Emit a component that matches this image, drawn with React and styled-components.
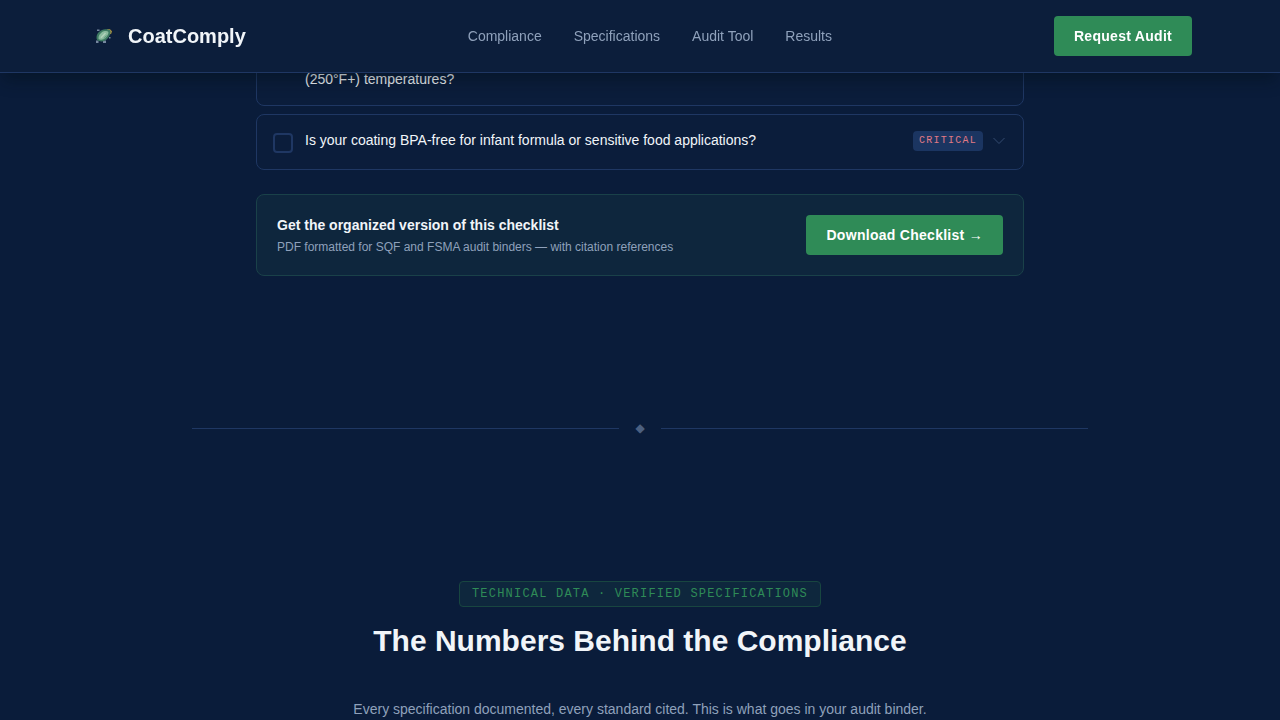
import React from "react";
import styled, { createGlobalStyle, ThemeProvider } from "styled-components";

const theme = {
  header: "#0c1e3b",
  card: "#0b1d3b",
  line: "#1f3763",
  green: "#2f8b57",
  text: "#f1f5f9",
  muted: "#8fa1bb",
  mono: '"Liberation Mono", monospace',
};

const GlobalStyle = createGlobalStyle`
  *, *::before, *::after { box-sizing: border-box; }
  body {
    margin: 0;
    background: #0a1c3a;
    color: #f1f5f9;
    font: 14px/20px "Liberation Sans", Arial, sans-serif;
  }
  h2, p { margin: 0; }
`;

const Header = styled.header`
  position: fixed;
  inset: 0 0 auto;
  z-index: 10;
  background: ${({ theme }) => theme.header};
  border-bottom: 1px solid ${({ theme }) => theme.line};
  box-shadow: 0 10px 15px -3px rgba(0, 14, 20, 0.4);
`;

const HeaderInner = styled.div`
  display: flex;
  align-items: center;
  justify-content: space-between;
  max-width: 1152px;
  margin: 0 auto;
  padding: 16px 24px;
`;

const Brand = styled.a`
  display: flex;
  align-items: center;
  gap: 8px;
  color: ${({ theme }) => theme.text};
  font-size: 20px;
  line-height: 28px;
  font-weight: 700;
  text-decoration: none;
`;

const LogoMark = styled.svg`
  width: 32px;
  height: 32px;
`;

const Nav = styled.nav`
  display: flex;
  gap: 32px;
`;

const NavLink = styled.a`
  color: ${({ theme }) => theme.muted};
  text-decoration: none;
`;

const Button = styled.button`
  flex: none;
  padding: 10px 20px;
  border: 0;
  border-radius: 4px;
  background: ${({ theme }) => theme.green};
  color: #fff;
  font: inherit;
  font-weight: 700;
  letter-spacing: 0.02em;
  cursor: pointer;
`;

const Main = styled.main`
  padding-top: 53px;
`;

const Checklist = styled.section`
  display: flex;
  flex-direction: column;
  gap: 8px;
  max-width: 768px;
  margin: 0 auto;
`;

const Item = styled.div`
  display: flex;
  align-items: flex-start;
  gap: 12px;
  padding: 16px;
  border: 1px solid ${({ theme }) => theme.line};
  border-radius: 8px;
  background: ${({ theme }) => theme.card};
`;

const Checkbox = styled.input`
  appearance: none;
  flex: none;
  width: 20px;
  height: 20px;
  margin: 2px 0 0;
  border: 2px solid ${({ theme }) => theme.line};
  border-radius: 4px;
  &:checked { background: ${({ theme }) => theme.green}; }
`;

const Question = styled.label`
  flex: 1;
  padding-left: ${({ $indent }) => ($indent ? "32px" : "0")};
  line-height: 19px;
`;

const ItemMeta = styled.div`
  display: flex;
  align-items: center;
  gap: 8px;
`;

const Severity = styled.span`
  padding: 2px 6px;
  border-radius: 4px;
  background: #1b3561;
  color: #e27a85;
  font: 10px/16px ${({ theme }) => theme.mono};
  letter-spacing: 0.125em;
`;

const Expand = styled.button`
  display: flex;
  padding: 0;
  border: 0;
  background: none;
  color: #344b70;
  cursor: pointer;
`;

const Callout = styled.aside`
  display: flex;
  align-items: center;
  justify-content: space-between;
  gap: 16px;
  margin-top: 16px;
  padding: 20px;
  border: 1px solid #1a4149;
  border-radius: 8px;
  background: #0e263d;
`;

const CalloutTitle = styled.p`
  margin-bottom: 4px;
  font-weight: 700;
`;

const CalloutNote = styled.p`
  color: ${({ theme }) => theme.muted};
  font-size: 12px;
  line-height: 16px;
`;

const Divider = styled.div`
  display: flex;
  align-items: center;
  gap: 16px;
  max-width: 896px;
  margin: 144px auto;
  color: #4c6080;
  font: 12px/17px "Liberation Sans", "DejaVu Sans", sans-serif;
  &::before, &::after {
    content: "";
    flex: 1;
    height: 1px;
    background: ${({ theme }) => theme.line};
  }
`;

const Specs = styled.section`
  display: flex;
  flex-direction: column;
  align-items: center;
  text-align: center;
`;

const Eyebrow = styled.p`
  padding: 4px 12px;
  border: 1px solid #184640;
  border-radius: 4px;
  background: #0e273d;
  color: ${({ theme }) => theme.green};
  font: 12px/16px ${({ theme }) => theme.mono};
  letter-spacing: 0.1em;
`;

const Heading = styled.h2`
  margin: 16px 0 40px;
  font-size: 30px;
  line-height: 36px;
`;

const Lead = styled.p`
  color: ${({ theme }) => theme.muted};
`;

const links = ["Compliance", "Specifications", "Audit Tool", "Results"];

function TurtleLogo() {
  return (
    <LogoMark viewBox="0 0 32 32" aria-hidden="true">
      <path d="M9 9.500h2.500V11H9zM8 20.500h2.500V23H8zM15 20.500h3V23h-3zM21 17h1.500v1.500H21z" fill="#7688a0" />
      <path d="m19 9 3 .2 2 2-1 3-2.500-1z" fill="#b0923f" />
      <path d="M8.500 17c.5-4 4-7.300 9-7.700 3.500-.3 5.500.7 5 3.200-.8 4.500-4 8.700-9 8.900-3.500.1-5.300-1.400-5-4.400z" fill="#3d7a62" />
      <path d="M10.500 18c.2-3.500 2.800-6.400 6.500-7 2.800-.4 4 .6 3.300 2.600-1.200 3.700-3.800 6-7 6.100-2 .1-2.900-.5-2.800-1.700z" fill="#8abb9f" />
      <path d="m13 17.800 4.500-4.800" stroke="#b0d2bb" strokeWidth="1.500" />
      <path d="M11.500 14.500 14 12M16 18.500l2.500-3" stroke="#5c967c" />
    </LogoMark>
  );
}

export default function App() {
  return (
    <ThemeProvider theme={theme}>
      <GlobalStyle />
      <Header>
        <HeaderInner>
          <Brand href="#top">
            <TurtleLogo />
            CoatComply
          </Brand>
          <Nav>
            {links.map((label) => (
              <NavLink key={label} href="#">{label}</NavLink>
            ))}
          </Nav>
          <Button>Request Audit</Button>
        </HeaderInner>
      </Header>
      <Main>
        <Checklist>
          <Item>
            <Question as="p" $indent>(250°F+) temperatures?</Question>
          </Item>
          <Item>
            <Checkbox type="checkbox" id="bpa-free" />
            <Question htmlFor="bpa-free">
              Is your coating BPA-free for infant formula or sensitive food applications?
            </Question>
            <ItemMeta>
              <Severity>CRITICAL</Severity>
              <Expand aria-label="Show details">
                <svg width="16" height="16" viewBox="0 0 16 16" fill="none" stroke="currentColor">
                  <path d="m2.500 5 5.500 5.500 5.500-5.500" />
                </svg>
              </Expand>
            </ItemMeta>
          </Item>
          <Callout>
            <div>
              <CalloutTitle>Get the organized version of this checklist</CalloutTitle>
              <CalloutNote>PDF formatted for SQF and FSMA audit binders — with citation references</CalloutNote>
            </div>
            <Button>Download Checklist →</Button>
          </Callout>
        </Checklist>
        <Divider>◆</Divider>
        <Specs>
          <Eyebrow>TECHNICAL DATA · VERIFIED SPECIFICATIONS</Eyebrow>
          <Heading>The Numbers Behind the Compliance</Heading>
          <Lead>Every specification documented, every standard cited. This is what goes in your audit binder.</Lead>
        </Specs>
      </Main>
    </ThemeProvider>
  );
}
